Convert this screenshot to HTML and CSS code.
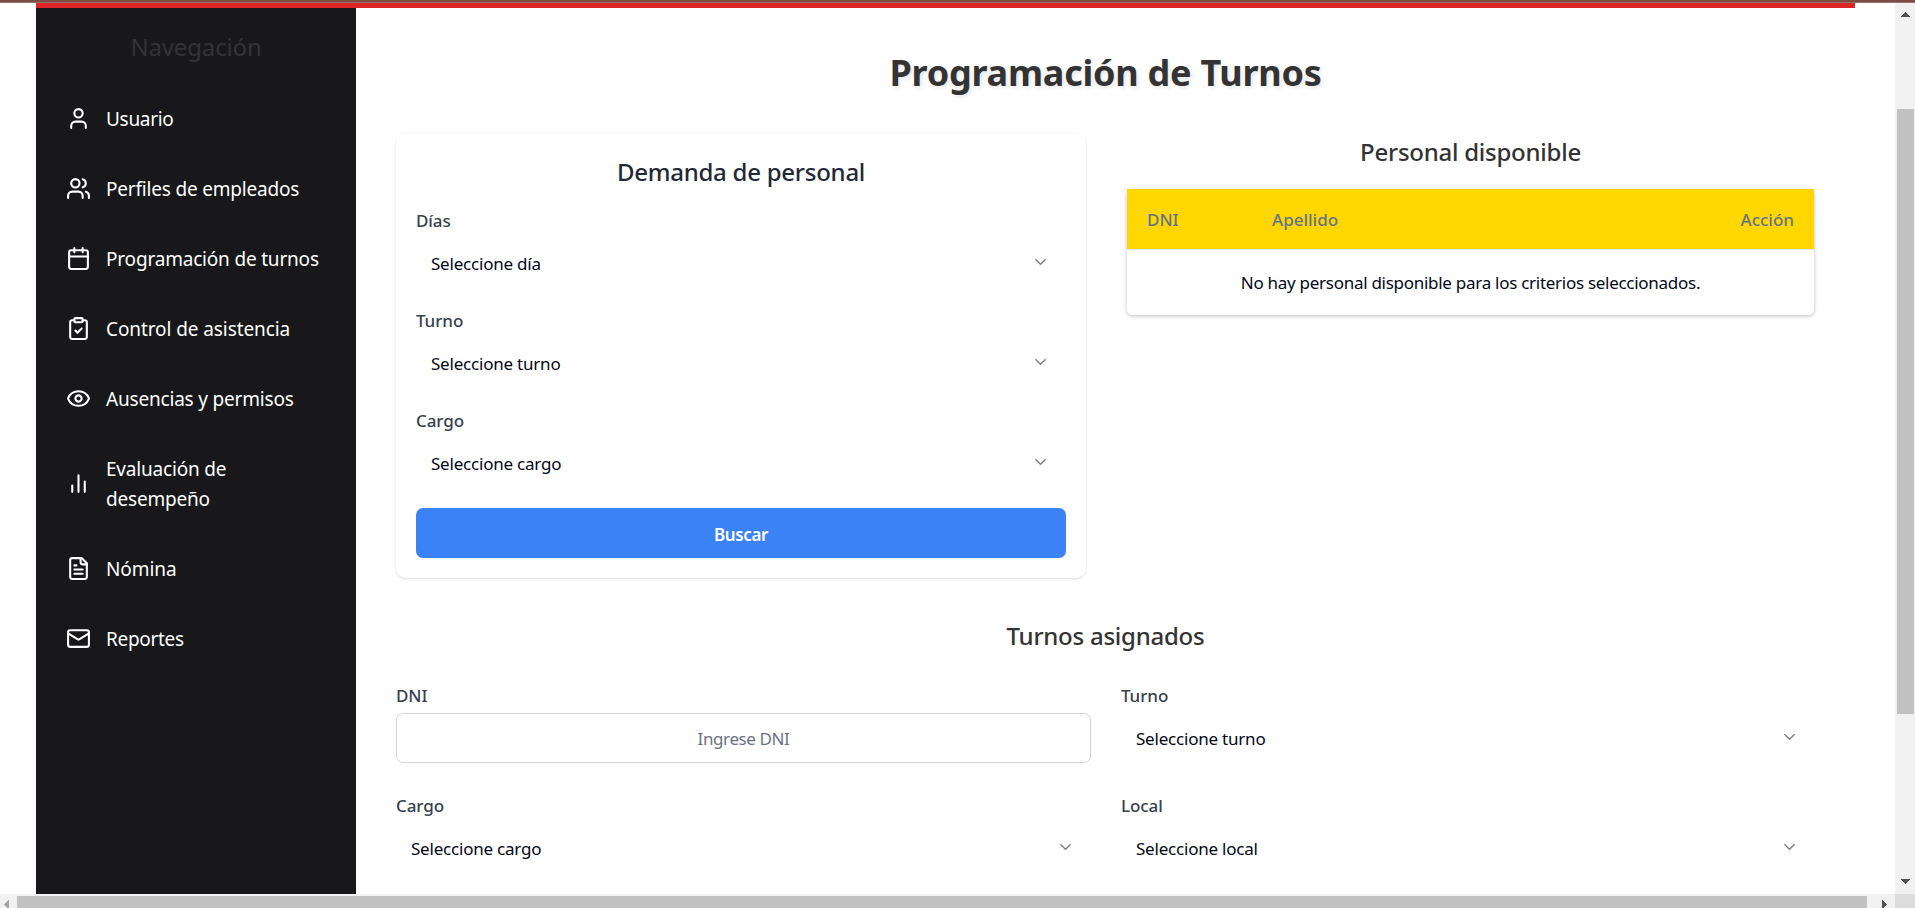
FILE: index.html
```html
<!DOCTYPE html>
<html lang="es">
<head>
<meta charset="utf-8">
<title>Programación de Turnos</title>
<link rel="stylesheet" href="styles.css">
</head>
<body>
<div class="window">
  <div class="edge"></div>
  <div class="viewport">
    <div class="page">
      <div class="banner"></div>
      <div class="layout">
        <aside class="sidebar">
          <h2 class="nav-title"><span class="t-nav">Navegación</span></h2>
          <nav class="nav">
            <a class="nav-item"><svg class="icon" viewBox="0 0 24 24"><path d="M19 21v-2a4 4 0 0 0-4-4H9a4 4 0 0 0-4 4v2"/><circle cx="12" cy="7" r="4"/></svg><span class="tight">Usuario</span></a>
            <a class="nav-item"><svg class="icon" viewBox="0 0 24 24"><path d="M16 21v-2a4 4 0 0 0-4-4H6a4 4 0 0 0-4 4v2"/><circle cx="9" cy="7" r="4"/><path d="M22 21v-2a4 4 0 0 0-3-3.87M16 3.13a4 4 0 0 1 0 7.75"/></svg><span>Perfiles de empleados</span></a>
            <a class="nav-item"><svg class="icon" viewBox="0 0 24 24"><path d="M8 2v4M16 2v4M3 10h18"/><rect x="3" y="4" width="18" height="18" rx="2"/></svg><span>Programación de turnos</span></a>
            <a class="nav-item"><svg class="icon" viewBox="0 0 24 24"><rect x="8" y="2" width="8" height="4" rx="1"/><path d="M16 4h2a2 2 0 0 1 2 2v14a2 2 0 0 1-2 2H6a2 2 0 0 1-2-2V6a2 2 0 0 1 2-2h2M9 14l2 2 4-4"/></svg><span class="loose">Control de asistencia</span></a>
            <a class="nav-item"><svg class="icon" viewBox="0 0 24 24"><path d="M2.062 12.348a1 1 0 0 1 0-.696 10.75 10.75 0 0 1 19.876 0 1 1 0 0 1 0 .696 10.75 10.75 0 0 1-19.876 0"/><circle cx="12" cy="12" r="3"/></svg><span>Ausencias y permisos</span></a>
            <a class="nav-item"><svg class="icon" viewBox="0 0 24 24"><path d="M18 20V10M12 20V4M6 20v-6"/></svg><span>Evaluación de<br>desempeño</span></a>
            <a class="nav-item"><svg class="icon" viewBox="0 0 24 24"><path d="M15 2H6a2 2 0 0 0-2 2v16a2 2 0 0 0 2 2h12a2 2 0 0 0 2-2V7Z"/><path d="M14 2v4a2 2 0 0 0 2 2h4M10 9H8M16 13H8M16 17H8"/></svg><span class="loose">Nómina</span></a>
            <a class="nav-item"><svg class="icon" viewBox="0 0 24 24"><rect x="2" y="4" width="20" height="16" rx="2"/><path d="m22 7-8.970 5.700a1.940 1.940 0 0 1-2.060 0L2 7"/></svg><span class="tight">Reportes</span></a>
          </nav>
        </aside>
        <main class="content">
          <h1 class="title">Programación de Turnos</h1>
          <div class="columns">
            <section class="card">
              <h2 class="heading dark">Demanda de personal</h2>
              <div class="field"><label class="label">Días</label><div class="select"><span>Seleccione día</span><svg class="chev" viewBox="0 0 14 8"><path d="M1.500 1l5.500 5.500L12.500 1"/></svg></div></div>
              <div class="field"><label class="label">Turno</label><div class="select"><span>Seleccione turno</span><svg class="chev" viewBox="0 0 14 8"><path d="M1.500 1l5.500 5.500L12.500 1"/></svg></div></div>
              <div class="field"><label class="label">Cargo</label><div class="select"><span>Seleccione cargo</span><svg class="chev" viewBox="0 0 14 8"><path d="M1.500 1l5.500 5.500L12.500 1"/></svg></div></div>
              <button class="button">Buscar</button>
            </section>
            <section class="available">
              <h2 class="heading">Personal disponible</h2>
              <div class="table">
                <div class="thead"><span>DNI</span><span>Apellido</span><span>Acción</span></div>
                <div class="empty">No hay personal disponible para los criterios seleccionados.</div>
              </div>
            </section>
          </div>
          <h2 class="heading assigned">Turnos asignados</h2>
          <div class="filters">
            <div class="filter"><label class="label">DNI</label><input class="input" placeholder="Ingrese DNI"></div>
            <div class="filter"><label class="label">Turno</label><div class="select"><span>Seleccione turno</span><svg class="chev" viewBox="0 0 14 8"><path d="M1.500 1l5.500 5.500L12.500 1"/></svg></div></div>
            <div class="filter"><label class="label">Cargo</label><div class="select"><span>Seleccione cargo</span><svg class="chev" viewBox="0 0 14 8"><path d="M1.500 1l5.500 5.500L12.500 1"/></svg></div></div>
            <div class="filter"><label class="label">Local</label><div class="select"><span>Seleccione local</span><svg class="chev" viewBox="0 0 14 8"><path d="M1.500 1l5.500 5.500L12.500 1"/></svg></div></div>
          </div>
        </main>
      </div>
    </div>
    <div class="vbar">
      <svg class="arrow-up" viewBox="0 0 9 5"><path d="M4 0h1v1h1v1h1v1h1v1h1v1H0V4h1V3h1V2h1V1h1z"/></svg>
      <div class="vthumb"></div>
      <svg class="arrow-down" viewBox="0 0 9 5"><path d="M0 0h9v1H8v1H7v1H6v1H5v1H4V4H3V3H2V2H1V1H0z"/></svg>
    </div>
    <div class="hbar">
      <svg class="arrow-left" viewBox="0 0 5 9"><path d="M5 0v9H4V8H3V7H2V6H1V5H0V4h1V3h1V2h1V1h1V0z"/></svg>
      <div class="hthumb"></div>
      <svg class="arrow-right" viewBox="0 0 5 9"><path d="M0 0v9h1V8h1V7h1V6h1V5h1V4H4V3H3V2H2V1H1V0z"/></svg>
    </div>
    <div class="corner"></div>
  </div>
</div>
</body>
</html>
```
FILE: styles.css
```css
* { box-sizing: border-box; margin: 0; padding: 0; }
body { font-family: "Segoe UI", "Noto Sans", "Open Sans", sans-serif; background: #fff; color: #020817; overflow: hidden; }
span, label { white-space: nowrap; }
.window { height: 908px; display: flex; flex-direction: column; overflow: hidden; }
.edge { height: 3px; flex: none; background: #7d4b44; border-bottom: 1px solid #91756b; }
.viewport { flex: 1; min-height: 0; display: grid; grid-template-columns: 1895px 20px; grid-template-rows: 891px 14px; }
.page { overflow: hidden; padding: 0 40px 0 36px; display: flex; flex-direction: column; }
.banner { height: 5px; flex: none; width: 1819px; background: #dc2626; }
.layout { flex: 1; min-height: 0; display: flex; }

.sidebar { width: 320px; flex: none; background: #18181b; color: #fff; padding: 10px 20px 0; }
.nav-title { height: 66px; line-height: 45px; font-size: 24px; font-weight: 400; color: #333; text-align: center; padding-top: 6px; letter-spacing: -.15px; }
.nav-item { display: flex; align-items: center; padding: 20px 10px; font-size: 19px; line-height: 30px; gap: 15px; letter-spacing: -.19px; }
.tight { letter-spacing: -.3px; }
.loose { letter-spacing: -.09px; }
.icon { width: 25px; height: 25px; margin-bottom: 2px; flex: none; fill: none; stroke: #fff; stroke-width: 2; stroke-linecap: round; stroke-linejoin: round; }

.content { width: 1499px; flex: none; padding: 40px 40px 0; }
.title { height: 50px; line-height: 49px; font-size: 36px; font-weight: 700; color: #333; text-align: center; letter-spacing: -.23px; text-shadow: 2px 2px 4px rgba(0,0,0,.1); }
.columns { display: grid; grid-template-columns: 690px 689px; gap: 40px; margin-top: 35px; height: 445px; }
.card { border-radius: 10px; padding: 20px; box-shadow: 0 1px 3px rgba(0,0,0,.14); }
.heading { font-size: 24px; font-weight: 500; line-height: 38px; color: #333; text-align: center; letter-spacing: -.25px; }
.dark { color: #1f2937; margin-bottom: 17px; }
.label { display: block; font-size: 17px; font-weight: 500; line-height: 25px; color: #374151; letter-spacing: -.08px; }
.field { height: 100px; }
.select { height: 50px; margin-top: 5px; padding: 0 20px 0 15px; display: flex; align-items: center; justify-content: space-between; font-size: 17px; letter-spacing: -.21px; }
.chev { width: 13px; height: 8px; fill: none; stroke: #7b7f87; stroke-width: 1.500; margin: 0 -1px 2px 0; }
.button { display: block; width: 650px; height: 50px; border: 0; border-radius: 7px; background: #3b82f6; color: #fff; font: 600 17px/50px "Segoe UI", "Noto Sans", sans-serif; letter-spacing: -.4px; padding-top: 2px; }
.available .heading { margin-bottom: 18px; }
.table { margin: 0 1px; border-radius: 5px; box-shadow: 0 1px 4px rgba(0,0,0,.25); }
.thead { height: 61px; background: #ffd700; border-bottom: 1px solid #e5e7eb; display: grid; grid-template-columns: 125px 1fr auto; align-items: center; padding: 0 20px; font-size: 17px; font-weight: 500; color: #64748b; }
.empty { height: 65px; line-height: 66px; font-size: 17px; text-align: center; letter-spacing: -.28px; }
.assigned { margin-top: 39px; }
.filters { display: grid; grid-template-columns: 695px 694px; column-gap: 30px; grid-auto-rows: 110px; margin-top: 28px; }
.input { width: 100%; height: 50px; margin-top: 5px; border: 1px solid #d1d5db; border-radius: 7px; text-align: center; font: 400 17px "Segoe UI", "Noto Sans", sans-serif; letter-spacing: -.4px; padding-top: 1px; }
.input::placeholder { color: #6b7280; }

.vbar { background: #f1f1f1; display: flex; flex-direction: column; align-items: center; padding-top: 9px; }
.vthumb { width: 17px; height: 605px; margin: 92px 1px 0 2px; background: #c1c1c1; }
.arrow-up, .arrow-down { width: 9px; height: 5px; flex: none; fill: #505050; }
.arrow-down { margin-top: 165px; }
.hbar { background: #f1f1f1; display: flex; align-items: flex-start; }
.hthumb { width: 1850px; height: 12px; margin: 2px 0 0 8px; background: #c1c1c1; }
.arrow-left, .arrow-right { width: 5px; height: 9px; flex: none; }
.arrow-left { fill: #a3a3a3; margin: 6px 0 0 4px; }
.arrow-right { fill: #505050; margin: 6px 0 0 15px; }
.corner { background: #dcdcdc; }
```
